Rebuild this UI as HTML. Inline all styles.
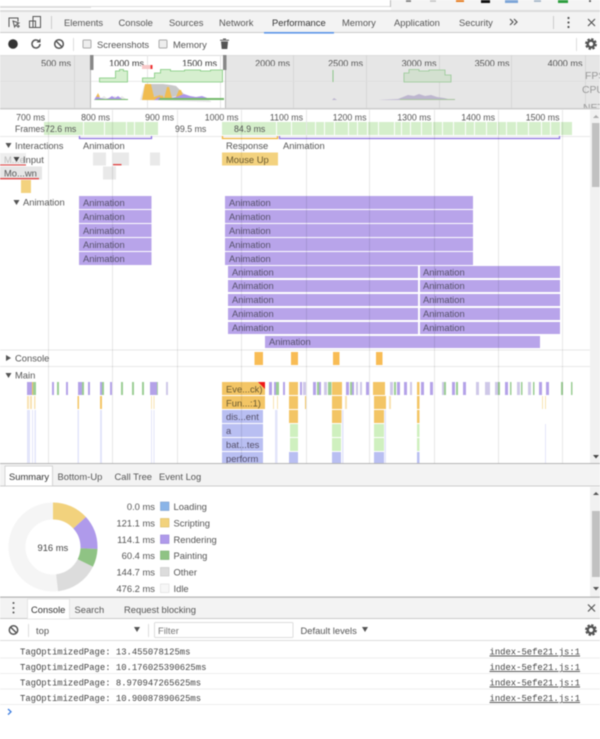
<!DOCTYPE html>
<html><head><meta charset="utf-8"><style>
html,body{margin:0;padding:0;background:#fff;width:600px;height:739px;overflow:hidden}
svg{display:block;filter:blur(.42px)}
text{font-family:"Liberation Sans",sans-serif;font-size:9.4px;fill:#555}
.m{font-family:"Liberation Mono",monospace;font-size:8.9px;fill:#444}
.b{fill:#55506a}
.o{fill:#6a5a30}
.t{font-size:8.8px}
.u{font-size:9.1px}
.s{font-size:10.4px;fill:#999}
</style></head><body>
<svg xmlns="http://www.w3.org/2000/svg" width="600" height="739" viewBox="0 0 600 739">
<defs><clipPath id="c1"><rect x="0" y="55" width="600" height="11"/></clipPath><clipPath id="c2"><rect x="0" y="55" width="600" height="53"/></clipPath></defs>
<rect width="600" height="739" fill="#fff"/>
<!-- browser top -->
<rect x="0" y="6" width="91" height="2" fill="#ddd"/><rect x="91" y="6" width="299" height="1" fill="#ddd"/>
<rect x="390" y="0" width="1" height="7" fill="#bbb"/><rect x="391" y="0" width="209" height="10" fill="#f4f4f4"/>
<rect x="0" y="10" width="600" height="2" fill="#dcdcdc"/>
<rect x="406" y="0" width="5" height="2" fill="#888"/><rect x="430" y="0" width="6" height="2" fill="#ccc"/><rect x="456" y="0" width="8" height="2" fill="#e67e22"/><rect x="481" y="0" width="9" height="3" fill="#111"/><rect x="505" y="0" width="13" height="3" fill="#7ea6d8"/><rect x="534" y="0" width="7" height="2" fill="#aabbcc"/><rect x="558" y="0" width="10" height="3" fill="#2e9e3f"/><rect x="589" y="0" width="2" height="2" fill="#666"/>
<!-- tab bar -->
<rect x="0" y="12" width="600" height="21" fill="#f3f3f3"/>
<rect x="0" y="32" width="600" height="1" fill="#ccc"/>
<rect x="264" y="32" width="70" height="1.600" fill="#5b94e8"/>
<path d="M9 27V18h9v3.500M13 21l1.600 6 1.200-2 2.400 2.200 1-1-2.300-2.200 2-1z" fill="none" stroke="#555" stroke-width="1"/>
<path d="M33 16.500h7.500v11H33zM29.500 21h6v6.500h-6z" fill="#f3f3f3" stroke="#555" stroke-width="1"/>
<rect x="51" y="16" width="1" height="13" fill="#ccc"/>
<text x="64" y="26">Elements</text><text x="118.500" y="26">Console</text><text x="169" y="26">Sources</text><text x="219" y="26">Network</text><text x="272" y="26" style="fill:#333">Performance</text><text x="342" y="26">Memory</text><text x="394" y="26">Application</text><text x="459" y="26">Security</text>
<path d="M510 19l3 3-3 3M514 19l3 3-3 3" fill="none" stroke="#555" stroke-width="1.200"/>
<rect x="553" y="16" width="1" height="13" fill="#ccc"/>
<circle cx="568.500" cy="18" r="1.100" fill="#555"/><circle cx="568.500" cy="22.500" r="1.100" fill="#555"/><circle cx="568.500" cy="27" r="1.100" fill="#555"/>
<path d="M588 19l7 7M595 19l-7 7" stroke="#555" stroke-width="1.200"/>
<!-- toolbar -->
<circle cx="13" cy="44" r="4.800" fill="#333"/>
<path d="M40 44a4 4 0 1 1-1.300-3" fill="none" stroke="#555" stroke-width="1.500"/><path d="M40.500 38.500v4h-4z" fill="#555"/>
<circle cx="59" cy="44" r="4.300" fill="none" stroke="#555" stroke-width="1.500"/><path d="M56 41l6 6" stroke="#555" stroke-width="1.500"/>
<rect x="73" y="38" width="1" height="13" fill="#ddd"/>
<rect x="83" y="40" width="8" height="8" rx="1" fill="#eee" stroke="#aaa"/><text x="97" y="48">Screenshots</text>
<rect x="159" y="40" width="8" height="8" rx="1" fill="#eee" stroke="#aaa"/><text x="173" y="48">Memory</text>
<path d="M221 41.500h7l-.7 7.500h-5.600zM220 39.700h9v1h-9zM223 38.500h3v1h-3z" fill="#555"/>
<rect x="576" y="38" width="1" height="13" fill="#ddd"/>
<g><circle cx="591" cy="44" r="3.300" fill="none" stroke="#555" stroke-width="2.400"/><circle cx="591" cy="44" r="5" fill="none" stroke="#555" stroke-width="1.800" stroke-dasharray="2.400 1.530"/></g>
<!-- overview -->
<rect x="0" y="55" width="600" height="53" fill="#e6e6e6"/>
<rect x="91" y="55" width="134" height="53" fill="#fff"/>
<rect x="0" y="55" width="600" height="1" fill="#ddd"/>
<g fill="#d6d6d6"><rect x="74" y="55" width="1" height="53"/><rect x="293" y="55" width="1" height="53"/><rect x="366" y="55" width="1" height="53"/><rect x="439" y="55" width="1" height="53"/><rect x="511" y="55" width="1" height="53"/><rect x="585" y="55" width="1" height="53"/></g>
<rect x="147" y="55" width="1" height="53" fill="#e6e6e6"/><rect x="220" y="55" width="1" height="53" fill="#e6e6e6"/>
<rect x="0" y="81" width="600" height=".6" fill="#ddd"/>
<g clip-path="url(#c1)" text-anchor="end"><text class="u" x="71" y="66.500">500 ms</text><text class="u" x="144" y="66.500" style="fill:#333">1000 ms</text><text class="u" x="217" y="66.500" style="fill:#333">1500 ms</text><text class="u" x="290" y="66.500">2000 ms</text><text class="u" x="363" y="66.500">2500 ms</text><text class="u" x="436.500" y="66.500">3000 ms</text><text class="u" x="509.500" y="66.500">3500 ms</text><text class="u" x="582.500" y="66.500">4000 ms</text></g>
<!-- fps -->
<path d="M99.500 82V78h16v-7h4v-1.500h4v1.500h4v11zM142.500 82V78h12v-5h6v-3.500h10v1.500h14v-1h16v1h10v-1h12V82z" fill="#d6efcf" stroke="#7ec97a" stroke-width=".8"/>
<path d="M333 70v12" stroke="#8dc68a" stroke-width="1"/>
<path d="M404 82V73h5v-3.500h10v1.500h10v-1h16v5h6v7z" fill="#d3e0d0" stroke="#96c994" stroke-width=".8"/>
<!-- cpu -->
<path d="M94 100l4-4 3 2 3-2 4 3 7-3 3 3 4-3 4 3 1 1zM140 100l4-14h7l11 2 6 1 10 8 9 1 9-1 7 1 8 3v1z" fill="#cfcfcf" opacity=".5"/>
<path d="M151 84h12l8 1 5 1 8 8-20 5-16-4z" fill="#c8c8c8"/>
<path d="M142 100l3-16h6l3 13 6-2 4 4 3-12h2l3 11 3 1 4-9h2l3 9 3 1h-45z" fill="#f0bc50"/>
<path d="M94 100l3-5 3 3 6 1 3-1 3-2 3 2 3-2 4 3 3 1zM154 100l5-3 6 2 6-1 5-1 8-3 6 2 6 1 6-1 8 3 5 1z" fill="#ad95ea"/>
<path d="M94 100l3-1h31v1zM158 100l2-2h64v2z" fill="#74b96c"/>
<path d="M96 97l2-4 2 4zM160 98h4l-2-3z" fill="#f0bc50"/>
<path d="M332 100l2-2 3 2zM378 100l20-1 5-2 5-2 6 1 5-2 6 2 6-1 6 2 7 1 8 2z" fill="#bdb6cf"/>
<path d="M400 100h55v-1h-55z" fill="#a7c29f"/>
<rect x="142" y="65" width="10" height="4" fill="#f8c8c8"/><rect x="150.500" y="65" width="2" height="4" fill="#e33"/>
<rect x="90" y="55" width="3.500" height="15" fill="#888"/><rect x="223" y="55" width="3.500" height="15" fill="#888"/>
<rect x="90" y="70" width="1" height="38" fill="#bbb"/><rect x="225" y="70" width="1" height="38" fill="#bbb"/>
<g clip-path="url(#c2)"><text class="s" x="585" y="79" style="fill:#999">FPS</text><text class="s" x="582" y="93" style="fill:#999">CPU</text><text class="s" x="583" y="111" style="fill:#999">NET</text></g>
<rect x="0" y="108" width="600" height="1.500" fill="#ccc"/>
<!-- scrollbar -->
<rect x="590" y="110" width="10" height="353" fill="#f1f1f1"/>
<rect x="592" y="123" width="7.500" height="64" fill="#c1c1c1"/>
<path d="M593 118h6l-3-3z" fill="#aaa"/><path d="M593 455h6l-3 3.500z" fill="#444"/>
<!-- ruler -->
<g text-anchor="end"><text class="t" x="45" y="120.500">700 ms</text><text class="t" x="110" y="120.500">800 ms</text><text class="t" x="174" y="120.500">900 ms</text><text class="t" x="238.500" y="120.500">1000 ms</text><text class="t" x="303" y="120.500">1100 ms</text><text class="t" x="366.500" y="120.500">1200 ms</text><text class="t" x="431" y="120.500">1300 ms</text><text class="t" x="495" y="120.500">1400 ms</text><text class="t" x="559.500" y="120.500">1500 ms</text></g>
<!-- frames -->
<path d="M38 122h45v13H38zM84 122h20v13H84zM105 122h21v13h-21zM127 122h7v13h-7zM135 122h9v13h-9zM145 122h13v13h-13zM222 122h54v13h-54zM277 122h14v13h-14zM292 122h14v13h-14zM307 122h8v13h-8zM316 122h8v13h-8zM325 122h9v13h-9zM335 122h13v13h-13zM349 122h8v13h-8zM358 122h9v13h-9zM368 122h10v13h-10zM379 122h15v13h-15zM395 122h6v13h-6zM402 122h8v13h-8zM411 122h10v13h-10zM422 122h10v13h-10zM433 122h9v13h-9zM443 122h10v13h-10zM454 122h11v13h-11zM466 122h8v13h-8zM475 122h11v13h-11zM487 122h10v13h-10zM498 122h8v13h-8zM507 122h9v13h-9zM517 122h11v13h-11zM529 122h12v13h-12zM542 122h8v13h-8zM551 122h9v13h-9zM561 122h11v13h-11z" fill="#d5efcb"/>
<rect x="14" y="122" width="30" height="13" fill="#fff"/>
<text class="t" x="15" y="132">Frames</text><text class="t" x="45" y="132">72.6 ms</text><text class="t" x="175" y="132">99.5 ms</text><text class="t" x="234" y="132">84.9 ms</text>
<rect x="0" y="136" width="590" height="1" fill="#e8e8e8"/>
<path d="M79.500 136v2.500h72V136" fill="none" stroke="#8d74e0" stroke-width="1.300"/>
<path d="M222.500 136v2.500h55V136" fill="none" stroke="#efb23a" stroke-width="1.300"/>
<path d="M279.500 136v2.500h280V136" fill="none" stroke="#8d74e0" stroke-width="1.300"/>
<!-- interactions -->
<path d="M5.500 143h6l-3 5z" fill="#555"/><text x="15" y="149">Interactions</text>
<text x="83" y="149">Animation</text><text x="226" y="149">Response</text><text x="283" y="149">Animation</text>
<!-- input -->
<rect x="0" y="153" width="26" height="12" fill="#eee"/><text x="4" y="163" style="fill:#bbb">M...e</text>
<rect x="0" y="164.500" width="26" height="1" fill="#e04040"/>
<path d="M13.500 157h6l-3 5z" fill="#444"/><text x="23" y="163">Input</text>
<g fill="#e9e9e9"><rect x="93" y="152.500" width="13" height="13"/><rect x="113" y="152.500" width="16" height="13"/><rect x="150" y="152.500" width="10" height="13"/><rect x="103" y="166.500" width="13" height="13"/></g>
<rect x="113" y="164" width="8.500" height="1.300" fill="#e04040"/>
<rect x="222" y="152.500" width="56" height="13" fill="#f3d27f"/><text x="226" y="163" class="o">Mouse Up</text>
<rect x="0" y="166.500" width="42" height="13" fill="#e6e6e6"/><text x="4" y="176.500">Mo...wn</text>
<rect x="0" y="178" width="39" height="1.300" fill="#e04040"/>
<rect x="21" y="180" width="10" height="13" fill="#f3d27f"/>
<!-- animation -->
<path d="M13.500 200h6l-3 5z" fill="#555"/><text x="23" y="205.500">Animation</text>
<path d="M79 196h72.500v13H79zM79 210h72.500v13H79zM79 224h72.500v13H79zM79 238h72.500v13H79zM79 252h72.500v13H79zM225 196h248v13H225zM225 210h248v13H225zM225 224h248v13H225zM225 238h248v13H225zM225 252h248v13H225zM228 266h190v12H228zM420 266h140v12H420zM228 280h190v12H228zM420 280h140v12H420zM228 294h190v12H228zM420 294h140v12H420zM228 308h190v12H228zM420 308h140v12H420zM228 322h190v12H228zM420 322h140v12H420zM265 336h275v12H265z" fill="#b8a4ea"/>
<g><text class="b" x="83" y="206">Animation</text><text class="b" x="83" y="220">Animation</text><text class="b" x="83" y="234">Animation</text><text class="b" x="83" y="248">Animation</text><text class="b" x="83" y="262">Animation</text>
<text class="b" x="229" y="206">Animation</text><text class="b" x="229" y="220">Animation</text><text class="b" x="229" y="234">Animation</text><text class="b" x="229" y="248">Animation</text><text class="b" x="229" y="262">Animation</text>
<text class="b" x="232" y="275.500">Animation</text><text class="b" x="232" y="289">Animation</text><text class="b" x="232" y="303">Animation</text><text class="b" x="232" y="317">Animation</text><text class="b" x="232" y="331">Animation</text>
<text class="b" x="423" y="275.500">Animation</text><text class="b" x="423" y="289">Animation</text><text class="b" x="423" y="303">Animation</text><text class="b" x="423" y="317">Animation</text><text class="b" x="423" y="331">Animation</text>
<text class="b" x="269" y="345">Animation</text></g>
<!-- console row -->
<rect x="0" y="349.500" width="590" height="1" fill="#e8e8e8"/>
<path d="M6 355v6l5-3z" fill="#555"/><text x="15" y="361.500">Console</text>
<g fill="#f8bc55"><rect x="254.500" y="352" width="8.500" height="13"/><rect x="291" y="352" width="7" height="13"/><rect x="333" y="352" width="6.500" height="13"/><rect x="376" y="352" width="6.500" height="13"/></g>
<rect x="0" y="366" width="590" height="1" fill="#e8e8e8"/>
<path d="M5.500 373h6l-3 5z" fill="#555"/><text x="15" y="378.500">Main</text>
<!-- flame row 1 -->
<path d="M27 382h5v13h-5zM52 382h2v13h-2zM66 382h2v13h-2zM78 382h4v13h-4zM88 382h2v13h-2zM100 382h2v13h-2zM110 382h2v13h-2zM150 382h7v13h-7zM269 382h3v13h-3zM274 382h3v13h-3zM283 382h2v13h-2zM300 382h2v13h-2zM313 382h3v13h-3zM319 382h2v13h-2zM346 382h3v13h-3zM352 382h2v13h-2zM366 382h3v13h-3zM397 382h3v13h-3zM404 382h3v13h-3zM421 382h3v13h-3zM430 382h3v13h-3zM452 382h3v13h-3zM463 382h3v13h-3zM505 382h3v13h-3zM539 382h3v13h-3zM546 382h3v13h-3z" fill="#b4a2e8"/>
<path d="M303 382h3v13h-3zM324 382h3v13h-3zM356 382h2v13h-2zM360 382h2v13h-2zM390 382h3v13h-3zM410 382h2v13h-2zM442 382h4v13h-4zM476 382h3v13h-3zM485 382h5v13h-5zM166 382h2v13h-2zM57 382h2v13h-2zM495 382h3v13h-3zM517 382h3v13h-3zM528 382h3v13h-3z" fill="#cfc8e8"/>
<path d="M33 382h3v13h-3zM57 382h2v13h-2zM82 382h2v13h-2zM102 382h2v13h-2zM121 382h2v13h-2zM132 382h2v13h-2zM142 382h2v13h-2zM157 382h0.800v13h-0.800zM276 382h3v13h-3zM317 382h2v13h-2zM328 382h3.500v13h-3.500zM350 382h2v13h-2zM394 382h2v13h-2zM444 382h2v13h-2zM456 382h2v13h-2zM498 382h2v13h-2zM510 382h1.500v13h-1.500zM521 382h1.500v13h-1.500zM533 382h1.500v13h-1.500zM561 382h2v13h-2zM571 382h1.500v13h-1.500z" fill="#9cce95"/>
<path d="M222 382h43v13h-43zM289 382h9v13h-9zM332 382h10v13h-10zM373 382h12v13h-12zM417 382h2.500v13h-2.500zM32 382h1v13h-1z" fill="#f3c565"/>
<path d="M258 382h7l0 7z" fill="#f01818"/>
<!-- flame rows 2..6 -->
<path d="M222 396h43v13h-43zM289 396h9v13h-9zM332 396h10v13h-10zM374 396h12v13h-12zM417 396h2.500v13h-2.500zM289 410h9v13h-9zM332 410h9.500v13h-9.500zM374 410h10v13h-10zM417 410h2.500v13h-2.500zM77.500 396h1.500v13h-1.500zM100 396h2v13h-2zM305 396h1v13h-1z" fill="#f3c565"/>
<path d="M27 396h2v13h-2zM30 396h2v13h-2zM34 396h1.500v13h-1.500zM151 396h1v13h-1zM153.500 396h1v13h-1zM273 396h1v13h-1zM277 396h1v13h-1zM345 396h2v13h-2zM389 396h2v13h-2zM542 396h1v13h-1zM545 396h1v13h-1z" fill="#f9e3b2"/>
<path d="M222 410h41v13h-41zM222 424h41v13h-41zM222 438h41v13h-41zM222 452h41v11h-41zM289 452h9v11h-9zM332 452h9v11h-9zM374 452h10v11h-10zM417 452h2.500v11h-2.500z" fill="#b9bff2"/>
<path d="M290 424h8v13h-8zM290 438h8v13h-8zM332 424h9v13h-9zM332 438h9v13h-9zM374 424h10v13h-10zM374 438h10v13h-10zM417 424h2.500v13h-2.500zM417 438h2.500v13h-2.500z" fill="#cff0bf"/>
<path d="M27 410h3v53h-3zM32 410h1v53h-1zM34.500 410h1.500v53h-1.500zM77.500 410h1.500v53h-1.500zM100 410h2v53h-2zM151 410h1v53h-1zM153.500 410h1v53h-1zM275 410h2.500v53h-2.500zM342 410h1.500v53h-1.500zM384.500 410h1.500v53h-1.500zM545 424h1v39h-1z" fill="#e3e5fa"/>
<!-- labels -->
<text x="226" y="392.500" class="o">Eve...ck)</text><text x="226" y="406.500" class="o">Fun...:1)</text>
<text x="226" y="420" class="b">dis...ent</text><text x="226" y="434" class="b">a</text><text x="226" y="448" class="b">bat...tes</text><text x="226" y="462" class="b">perform</text>
<!-- grid -->
<g fill="#000" opacity=".09"><rect x="48" y="110" width="1" height="353"/><rect x="112" y="110" width="1" height="353"/><rect x="177" y="110" width="1" height="353"/><rect x="241" y="110" width="1" height="353"/><rect x="306" y="110" width="1" height="353"/><rect x="369" y="110" width="1" height="353"/><rect x="434" y="110" width="1" height="353"/><rect x="498" y="110" width="1" height="353"/><rect x="562" y="110" width="1" height="353"/></g>
<!-- bottom tabs -->
<rect x="0" y="463" width="600" height="1.300" fill="#b5b5b5"/>
<rect x="0" y="464" width="600" height="22" fill="#f3f3f3"/>
<rect x="0" y="485.500" width="600" height="1" fill="#ccc"/>
<rect x="5" y="466" width="47.500" height="20" fill="#fff" stroke="#ccc" stroke-width=".8"/>
<text x="9" y="480" style="fill:#333">Summary</text><text x="57.500" y="480">Bottom-Up</text><text x="114.500" y="480">Call Tree</text><text x="159" y="480">Event Log</text>
<!-- summary -->
<rect x="590" y="487" width="10" height="110" fill="#f1f1f1"/><rect x="592" y="511" width="8" height="66" fill="#c1c1c1"/>
<path d="M593 495h6l-3-3z" fill="#555"/><path d="M593 587h6l-3 3.500z" fill="#555"/>
<g transform="rotate(-90 53 547)" fill="none" stroke-width="17">
<circle cx="53" cy="547" r="36" stroke="#f5f5f5"/>
<circle cx="53" cy="547" r="36" stroke="#f2d27d" stroke-dasharray="29.900 196.300"/>
<circle cx="53" cy="547" r="36" stroke="#af9aeb" stroke-dasharray="28.180 198.020" stroke-dashoffset="-29.900"/>
<circle cx="53" cy="547" r="36" stroke="#8fc384" stroke-dasharray="14.920 211.280" stroke-dashoffset="-58.080"/>
<circle cx="53" cy="547" r="36" stroke="#dcdcdc" stroke-dasharray="35.730 190.470" stroke-dashoffset="-73"/>
</g>
<text x="37.500" y="551" style="fill:#444">916 ms</text>
<g text-anchor="end"><text x="155" y="510">0.0 ms</text><text x="155" y="526.500">121.1 ms</text><text x="155" y="543">114.1 ms</text><text x="155" y="559">60.4 ms</text><text x="155" y="575.500">144.7 ms</text><text x="155" y="592">476.2 ms</text></g>
<rect x="160.500" y="502" width="8.500" height="8.500" fill="#8ab4e8" stroke="#7a9ccc" stroke-width=".6"/>
<rect x="160.500" y="518.500" width="8.500" height="8.500" fill="#f2d27d" stroke="#d8b860" stroke-width=".6"/>
<rect x="160.500" y="535" width="8.500" height="8.500" fill="#af9aeb" stroke="#9680d4" stroke-width=".6"/>
<rect x="160.500" y="551" width="8.500" height="8.500" fill="#8fc384" stroke="#79ad6f" stroke-width=".6"/>
<rect x="160.500" y="567.500" width="8.500" height="8.500" fill="#dcdcdc" stroke="#c5c5c5" stroke-width=".6"/>
<rect x="160.500" y="584" width="8.500" height="8.500" fill="#f7f7f7" stroke="#ddd" stroke-width=".6"/>
<text x="173.500" y="510">Loading</text><text x="173.500" y="526.500">Scripting</text><text x="173.500" y="543">Rendering</text><text x="173.500" y="559">Painting</text><text x="173.500" y="575.500">Other</text><text x="173.500" y="592">Idle</text>
<!-- console drawer -->
<rect x="0" y="596.500" width="600" height="1.300" fill="#b5b5b5"/>
<rect x="0" y="598" width="600" height="20" fill="#f3f3f3"/>
<rect x="0" y="618" width="600" height="1" fill="#ccc"/>
<circle cx="13.500" cy="603" r="1" fill="#555"/><circle cx="13.500" cy="608" r="1" fill="#555"/><circle cx="13.500" cy="612.500" r="1" fill="#555"/>
<rect x="27.500" y="599" width="42" height="20" fill="#fff" stroke="#ddd" stroke-width=".7"/>
<text x="31" y="613" style="fill:#333">Console</text><text x="74.500" y="613">Search</text><text x="124" y="613">Request blocking</text>
<path d="M588 604.500l7 7M595 604.500l-7 7" stroke="#555" stroke-width="1.200"/>
<circle cx="13.500" cy="630" r="4.200" fill="none" stroke="#555" stroke-width="1.500"/><path d="M10.500 627l6 6" stroke="#555" stroke-width="1.500"/>
<rect x="28" y="624" width="1" height="13" fill="#ddd"/>
<text x="36" y="634">top</text>
<path d="M134 627h6l-3 5z" fill="#555"/>
<rect x="148" y="624" width="1" height="13" fill="#ddd"/>
<rect x="154.500" y="622.500" width="138.500" height="15" rx="1" fill="#fff" stroke="#ddd"/>
<text x="158" y="634" style="fill:#777">Filter</text>
<text x="300.500" y="634">Default levels</text>
<path d="M362 627h6l-3 5z" fill="#555"/>
<g><circle cx="591" cy="630" r="3.300" fill="none" stroke="#555" stroke-width="2.400"/><circle cx="591" cy="630" r="5" fill="none" stroke="#555" stroke-width="1.800" stroke-dasharray="2.400 1.530"/></g>
<rect x="0" y="640" width="600" height="1" fill="#ddd"/>
<g fill="#eee"><rect x="0" y="657.500" width="600" height="1"/><rect x="0" y="673" width="600" height="1"/><rect x="0" y="688.500" width="600" height="1"/><rect x="0" y="704" width="600" height="1"/></g>
<text class="m" x="20" y="654.500">TagOptimizedPage: 13.455078125ms</text>
<text class="m" x="20" y="670">TagOptimizedPage: 10.176025390625ms</text>
<text class="m" x="20" y="685.500">TagOptimizedPage: 8.970947265625ms</text>
<text class="m" x="20" y="701">TagOptimizedPage: 10.90087890625ms</text>
<text class="m" x="489.500" y="654.500" text-decoration="underline">index-5efe21.js:1</text><text class="m" x="489.500" y="670" text-decoration="underline">index-5efe21.js:1</text><text class="m" x="489.500" y="685.500" text-decoration="underline">index-5efe21.js:1</text><text class="m" x="489.500" y="701" text-decoration="underline">index-5efe21.js:1</text>
<path d="M8 709l3 2.800-3 2.800" fill="none" stroke="#3f7fe0" stroke-width="1.300"/>
</svg>
</body></html>
